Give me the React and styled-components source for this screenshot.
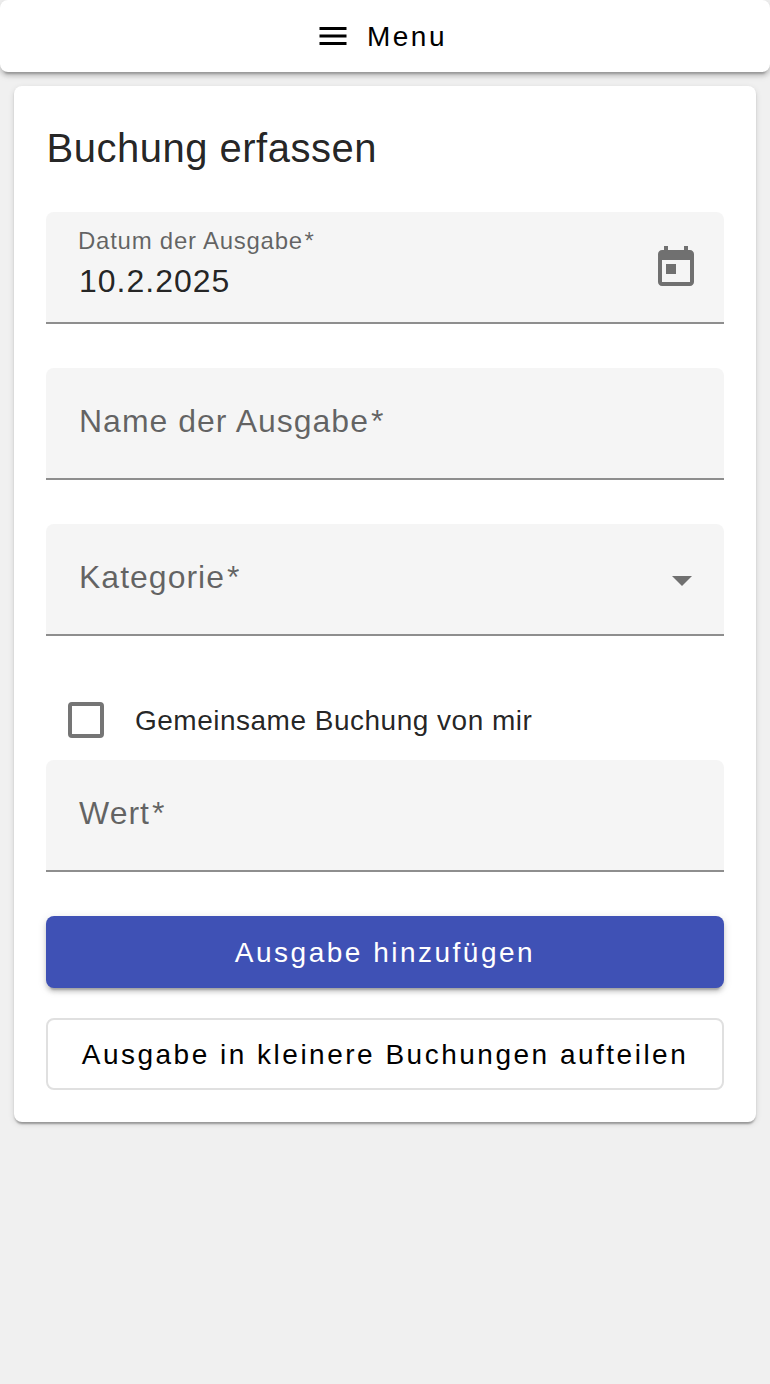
import React from 'react';
import styled, { createGlobalStyle } from 'styled-components';

const Global = createGlobalStyle`
  * { box-sizing: border-box; }
  body {
    margin: 0;
    min-height: 100vh;
    background: #f0f0f0;
    color: rgba(0, 0, 0, 0.87);
    font-family: "Liberation Sans", Arial, sans-serif;
  }
  button { font-family: inherit; }
`;

const raised = '0 6px 2px -4px rgba(0,0,0,.2), 0 4px 4px 0 rgba(0,0,0,.14), 0 2px 10px 0 rgba(0,0,0,.12)';

const MenuButton = styled.button`
  display: flex;
  width: 100%;
  height: 72px;
  align-items: center;
  justify-content: center;
  gap: 16px;
  padding: 0 8px 0 0;
  border: 0;
  border-radius: 8px;
  background: #fff;
  color: #000;
  font-size: 28px;
  letter-spacing: 2.5px;
  box-shadow: ${raised};
`;

const MenuText = styled.span`
  padding-top: 2px;
`;

const Card = styled.main`
  display: flex;
  flex-direction: column;
  margin: 14px 14px 0;
  height: 1036px;
  padding: 32px;
  border-radius: 8px;
  background: #fff;
  box-shadow: 0 4px 2px -2px rgba(0,0,0,.2), 0 2px 2px 0 rgba(0,0,0,.14), 0 2px 6px 0 rgba(0,0,0,.12);
`;

const Title = styled.h1`
  margin: 0 0 34px;
  padding-left: 0.5px;
  font-size: 40px;
  line-height: 60px;
  font-weight: 400;
  letter-spacing: 0.5px;
`;

const Field = styled.label`
  display: flex;
  flex: none;
  align-items: center;
  justify-content: space-between;
  height: 112px;
  margin-bottom: 44px;
  padding: 0 24px 4px 32px;
  border-radius: 8px 8px 0 0;
  border-bottom: 2px solid rgba(0, 0, 0, 0.42);
  background: #f5f5f5;
`;

const Placeholder = styled.span`
  padding-left: 1px;
  font-size: 32px;
  line-height: 48px;
  letter-spacing: 1px;
  color: rgba(0, 0, 0, 0.6);
`;

const Stack = styled.span`
  display: flex;
  flex-direction: column;
`;

const FloatingLabel = styled.span`
  font-size: 24px;
  line-height: 32px;
  letter-spacing: 0.75px;
  color: rgba(0, 0, 0, 0.6);
`;

const Required = styled.span`
  margin-left: ${(p) => (p.$small ? '1.5px' : '2px')};
  &::after { content: "*"; }
`;

const Value = styled.span`
  padding-left: 1px;
  font-size: 32px;
  line-height: 48px;
  letter-spacing: 1px;
`;

const CheckRow = styled.label`
  display: flex;
  flex: none;
  align-items: center;
  height: 80px;
  padding-left: 22px;
  gap: 31px;
  font-size: 28px;
  letter-spacing: 0.5px;
`;

const CheckText = styled.span`
  padding-top: 2px;
`;

const Box = styled.span`
  width: 36px;
  height: 36px;
  border: 4px solid #757575;
  border-radius: 4px;
`;

const Action = styled.button`
  flex: none;
  height: 72px;
  padding: 2px 0 0;
  border: ${(p) => (p.$primary ? '0' : '2px solid #e0e0e0')};
  border-radius: 8px;
  background: ${(p) => (p.$primary ? '#3f51b5' : '#fff')};
  color: ${(p) => (p.$primary ? '#fff' : '#000')};
  box-shadow: ${(p) => (p.$primary ? raised : 'none')};
  font-size: 28px;
  letter-spacing: 2.5px;
  & + & { margin-top: 30px; }
`;

const Icon = styled.svg`
  flex: none;
  display: block;
  margin-top: ${(p) => p.$drop ?? 0}px;
  fill: ${(p) => p.$color ?? 'rgba(0, 0, 0, 0.54)'};
`;

export default function App() {
  return (
    <>
      <Global />
      <MenuButton>
        <Icon $color="#000" width="36" height="36" viewBox="0 0 24 24">
          <path d="M3 18h18v-2H3v2zm0-5h18v-2H3v2zm0-7v2h18V6H3z" />
        </Icon>
        <MenuText>Menu</MenuText>
      </MenuButton>
      <Card>
        <Title>Buchung erfassen</Title>
        <Field>
          <Stack>
            <FloatingLabel>Datum der Ausgabe<Required $small /></FloatingLabel>
            <Value>10.2.2025</Value>
          </Stack>
          <Icon $drop={6} width="48" height="48" viewBox="0 0 24 24">
            <path d="M19 3h-1V1h-2v2H8V1H6v2H5c-1.11 0-1.99.9-1.99 2L3 19c0 1.1.89 2 2 2h14c1.1 0 2-.9 2-2V5c0-1.1-.9-2-2-2zm0 16H5V8h14v11zM7 10h5v5H7z" />
          </Icon>
        </Field>
        <Field>
          <Placeholder>Name der Ausgabe<Required /></Placeholder>
        </Field>
        <Field>
          <Placeholder>Kategorie<Required /></Placeholder>
          <Icon $drop={8} width="36" height="10" viewBox="0 0 36 10">
            <path d="M8 0h20L18 10z" />
          </Icon>
        </Field>
        <CheckRow>
          <Box />
          <CheckText>Gemeinsame Buchung von mir</CheckText>
        </CheckRow>
        <Field>
          <Placeholder>Wert<Required /></Placeholder>
        </Field>
        <Action $primary>Ausgabe hinzufügen</Action>
        <Action>Ausgabe in kleinere Buchungen aufteilen</Action>
      </Card>
    </>
  );
}
